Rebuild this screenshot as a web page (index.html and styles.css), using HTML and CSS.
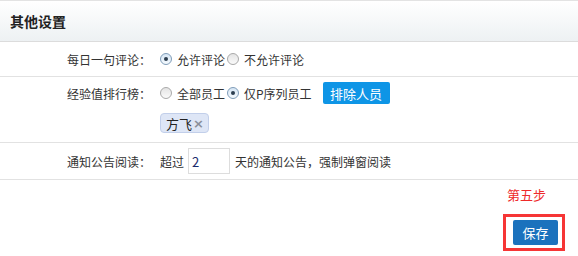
FILE: index.html
```html
<!DOCTYPE html>
<html lang="zh-CN">
<head>
    <meta charset="UTF-8">
    <title>其他设置</title>
    <link rel="stylesheet" href="styles.css">
</head>
<body>
    <div class="panel">
        <div class="panel-header">其他设置</div>

        <div class="form-row row-comment">
            <div class="row-label">每日一句评论：</div>
            <div class="row-body">
                <label class="radio"><span class="radio-dot checked"></span>允许评论</label>
                <label class="radio"><span class="radio-dot"></span>不允许评论</label>
            </div>
        </div>

        <div class="form-row row-rank">
            <div class="row-label">经验值排行榜：</div>
            <div class="row-body">
                <div class="line">
                    <label class="radio"><span class="radio-dot"></span>全部员工</label>
                    <label class="radio"><span class="radio-dot checked"></span>仅P序列员工</label>
                    <button class="btn btn-light">排除人员</button>
                </div>
                <div class="tags">
                    <span class="tag">方飞<span class="tag-close">×</span></span>
                </div>
            </div>
        </div>

        <div class="form-row row-notice">
            <div class="row-label">通知公告阅读：</div>
            <div class="row-body">
                <span>超过</span>
                <input class="days" type="text" value="2">
                <span>天的通知公告，强制弹窗阅读</span>
            </div>
        </div>

        <div class="footer">
            <div class="step">第五步</div>
            <div class="highlight">
                <button class="btn btn-save">保存</button>
            </div>
        </div>
    </div>
</body>
</html>
```

FILE: styles.css
```css
body {
    margin: 0;
    font-family: "Noto Sans CJK SC", "Liberation Sans", sans-serif;
    font-size: 12px;
    color: #333;
    background: #fff;
}

.panel-header {
    height: 40px;
    line-height: 40px;
    padding-left: 10px;
    border-top: 1px solid #e3e3e3;
    border-bottom: 1px solid #dcdcdc;
    background: linear-gradient(#ffffff, #edf1f3);
    font-size: 14px;
    font-weight: bold;
    color: #222;
}

.form-row {
    display: flex;
    border-bottom: 1px solid #e2e2e2;
}

.row-label {
    width: 151px;
    text-align: right;
    flex-shrink: 0;
}

.row-body {
    padding-left: 9px;
    display: flex;
    align-items: center;
}

.row-comment {
    height: 34px;
    align-items: center;
}

.row-rank {
    height: 65px;
}

.row-rank .row-label {
    padding-top: 8px;
}

.row-rank .row-body {
    flex-direction: column;
    align-items: flex-start;
    padding-top: 5px;
}

.line {
    display: flex;
    align-items: center;
}

.tags {
    margin-top: 9px;
}

.row-notice {
    height: 36px;
    align-items: center;
}

.radio {
    display: inline-flex;
    align-items: center;
    margin-right: 2px;
}

.radio-dot {
    width: 10px;
    height: 10px;
    border: 1px solid #a9a9a9;
    border-radius: 50%;
    background: linear-gradient(#e4e4e4, #fafafa);
    margin-right: 5px;
    position: relative;
}

.radio-dot.checked {
    border-color: #7f9db9;
    background: linear-gradient(#d6e6f5, #f4f9fd);
}

.radio-dot.checked::after {
    content: "";
    position: absolute;
    left: 3px;
    top: 3px;
    width: 4px;
    height: 4px;
    border-radius: 50%;
    background: #2c3e50;
}

.btn {
    border: none;
    font-family: inherit;
    font-size: 13px;
    color: #fff;
    border-radius: 2px;
    cursor: pointer;
}

.btn-light {
    background-color: #0e95e6;
    width: 67px;
    height: 22px;
    margin-left: 9px;
    padding: 0;
}

.tag {
    display: inline-flex;
    align-items: center;
    height: 18px;
    padding: 0 4px 0 5px;
    background-color: #dee6f6;
    border: 1px solid #c2cfea;
    border-radius: 4px;
    font-size: 13px;
    color: #222;
}

.tag-close {
    font-family: "DejaVu Sans", sans-serif;
    font-size: 13px;
    font-weight: bold;
    color: #8a8f99;
    margin-left: 1px;
}

.days {
    width: 42px;
    height: 26px;
    margin: 0 5px 0 4px;
    padding: 0 0 0 3px;
    border: 1px solid #ddd;
    font-family: inherit;
    font-size: 13px;
    color: #1a2a6c;
    box-sizing: border-box;
}

.footer {
    display: flex;
    flex-direction: column;
    align-items: flex-end;
    padding-right: 13px;
}

.step {
    color: #ee2a2a;
    font-size: 13px;
    margin-top: 7px;
    margin-right: 19px;
    line-height: 16px;
}

.highlight {
    margin-top: 11px;
    border: 3px solid #f63535;
    padding: 3px 4px 3px 7px;
}

.btn-save {
    display: block;
    width: 45px;
    height: 25px;
    padding: 0;
    background-color: #1b72bd;
    font-size: 13px;
}
```
